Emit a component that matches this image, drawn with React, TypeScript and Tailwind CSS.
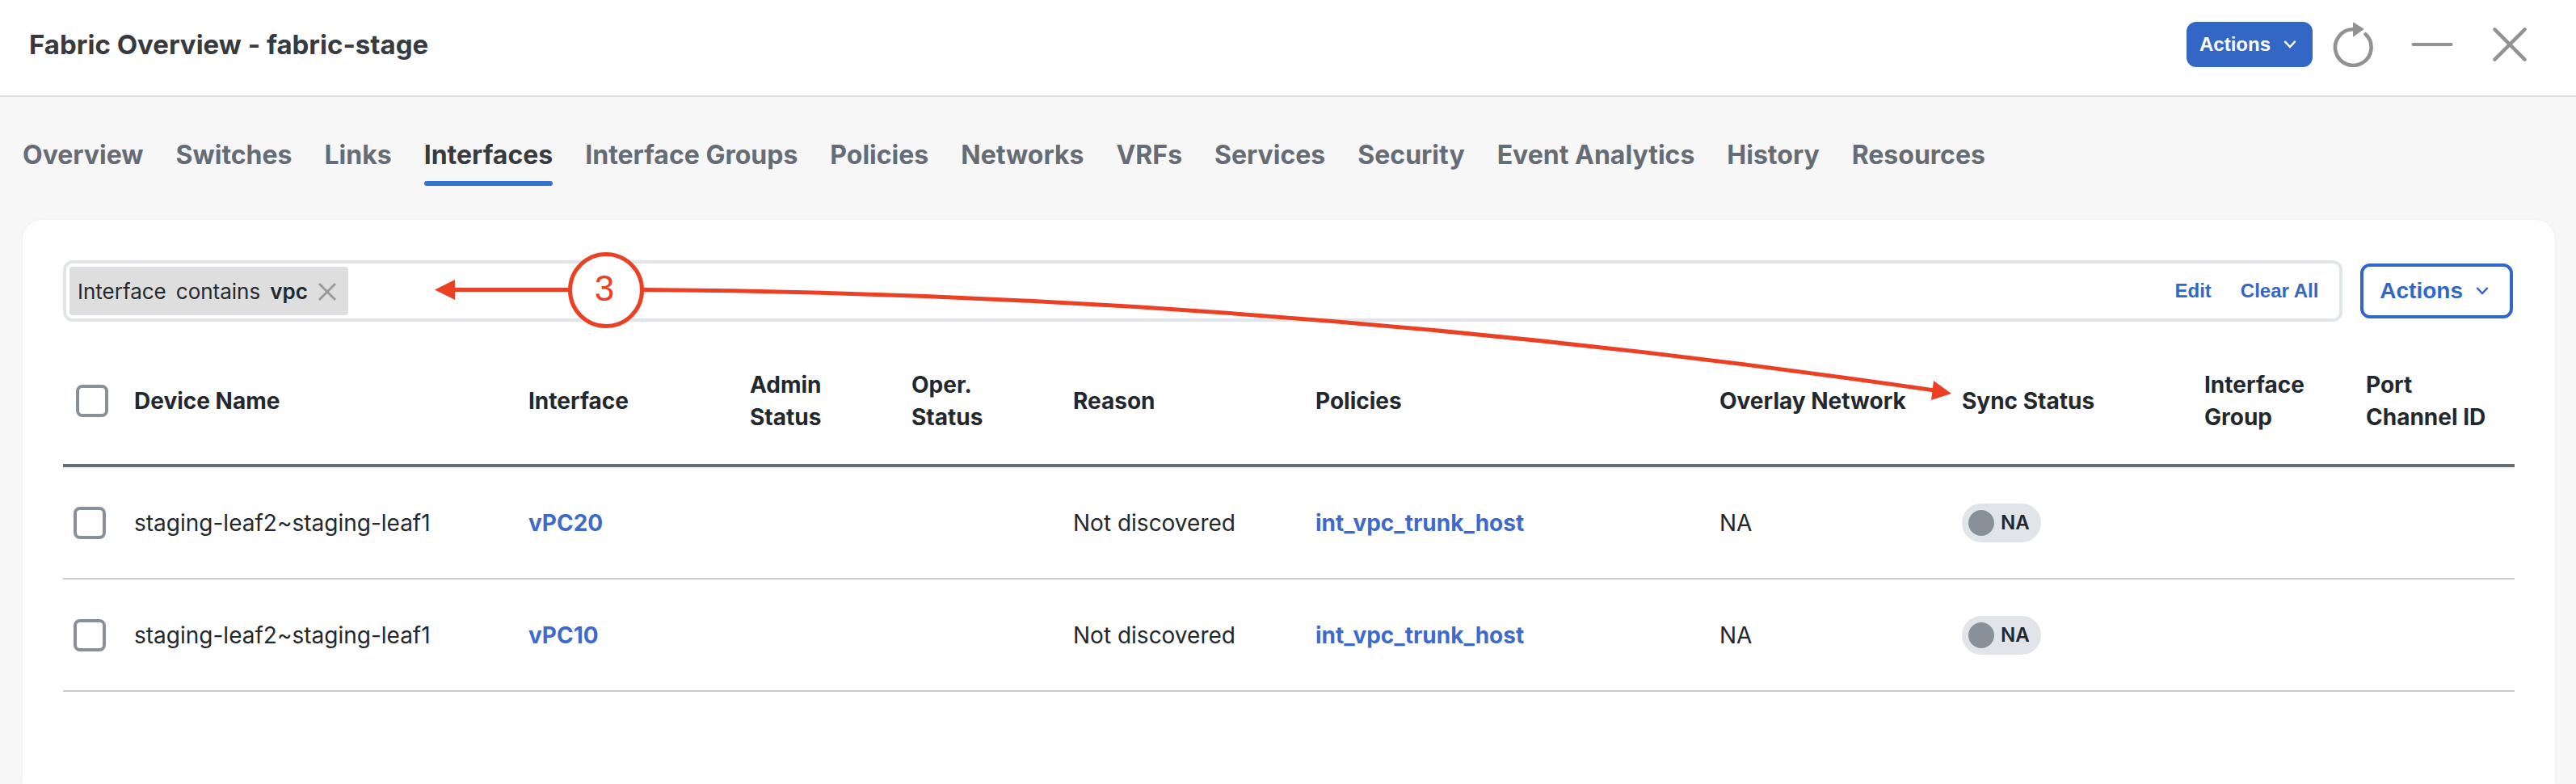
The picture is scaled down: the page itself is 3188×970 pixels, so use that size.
import React from "react";

const tabs = [
  "Overview",
  "Switches",
  "Links",
  "Interfaces",
  "Interface Groups",
  "Policies",
  "Networks",
  "VRFs",
  "Services",
  "Security",
  "Event Analytics",
  "History",
  "Resources",
];

const columns = [
  { label: "Device Name", width: "w-[488px]" },
  { label: "Interface", width: "w-[274px]" },
  { label: "Admin Status", width: "w-[200px]" },
  { label: "Oper. Status", width: "w-[200px]" },
  { label: "Reason", width: "w-[300px]" },
  { label: "Policies", width: "w-[500px]" },
  { label: "Overlay Network", width: "w-[300px]" },
  { label: "Sync Status", width: "w-[300px]" },
  { label: "Interface Group", width: "w-[200px]" },
  { label: "Port Channel ID", width: "w-[200px]" },
];

const rows = [
  { device: "staging-leaf2~staging-leaf1", name: "vPC20", reason: "Not discovered", policy: "int_vpc_trunk_host", network: "NA", sync: "NA" },
  { device: "staging-leaf2~staging-leaf1", name: "vPC10", reason: "Not discovered", policy: "int_vpc_trunk_host", network: "NA", sync: "NA" },
];

function Chevron() {
  return (
    <svg width="16" height="10" viewBox="0 0 16 10" fill="none" stroke="currentColor" strokeWidth="2.4" strokeLinecap="round" aria-hidden="true">
      <path d="M2 1.7 8 8l6-6.3" />
    </svg>
  );
}

function Checkbox({ label }: { label: string }) {
  return (
    <input
      type="checkbox"
      aria-label={label}
      className="block size-10 appearance-none rounded-lg border-4 border-[#889099] bg-white checked:bg-[#3367c5]"
    />
  );
}

function Header() {
  return (
    <header className="flex h-[120px] items-center justify-between border-b-2 border-[#dfdfdf] bg-white pr-[60px] pb-2 pl-9">
      <h1 className="text-[33px] leading-10 font-bold text-[#373a3f]">Fabric Overview - fabric-stage</h1>
      <div className="flex items-center text-[#929292]">
        <button type="button" className="mr-6 flex h-14 items-center gap-4 rounded-xl bg-[#3367c5] pr-5 pl-4 font-['Liberation_Sans',sans-serif] text-2xl font-bold text-white">
          Actions
          <Chevron />
        </button>
        <button type="button" aria-label="Refresh" className="mr-[46px]">
          <svg width="52" height="56" viewBox="0 0 52 56" fill="none" aria-hidden="true">
            <path d="M26 9.3A22.3 22.3 0 1 0 41.6 15.4" stroke="currentColor" strokeWidth="4.6" strokeLinecap="round" />
            <path d="M26.5 1v17l12.5-9z" fill="currentColor" stroke="currentColor" strokeLinejoin="round" />
          </svg>
        </button>
        <button type="button" aria-label="Minimize" className="mr-12">
          <svg width="52" height="44" viewBox="0 0 52 44" stroke="currentColor" strokeWidth="4" strokeLinecap="round" aria-hidden="true">
            <path d="M2.5 22h47" />
          </svg>
        </button>
        <button type="button" aria-label="Close">
          <svg width="44" height="44" viewBox="0 0 44 44" stroke="currentColor" strokeWidth="4.4" strokeLinecap="round" aria-hidden="true">
            <path d="M3.4 3.4l37.2 37.2M40.6 3.4 3.4 40.6" />
          </svg>
        </button>
      </div>
    </header>
  );
}

function FilterBar() {
  return (
    <div className="flex items-center gap-[22px]">
      <div className="flex h-[76px] flex-1 items-center justify-between rounded-xl border-4 border-[#e1e4e8] pr-[26px] pl-1">
        <div className="flex h-[60px] items-center rounded bg-[#dedede] pr-[14px] pl-[10px] text-[26px] text-[#23282e]">
          <span className="mr-3">Interface</span>
          <span className="mr-3">contains</span>
          <span className="mr-3 font-semibold">vpc</span>
          <button type="button" aria-label="Remove filter" className="text-[#9b9b9b]">
            <svg width="24" height="24" viewBox="0 0 24 24" stroke="currentColor" strokeWidth="3" aria-hidden="true">
              <path d="M2 3l20 20M22 3 2 23" />
            </svg>
          </button>
        </div>
        <div className="flex gap-9 font-['Liberation_Sans',sans-serif] text-2xl font-bold text-[#3367c5]">
          <button type="button">Edit</button>
          <button type="button">Clear All</button>
        </div>
      </div>
      <button type="button" className="mr-[2px] flex h-[68px] items-center gap-4 rounded-xl border-4 border-[#3367c5] pr-[26px] pl-5 font-['Liberation_Sans',sans-serif] text-[28px] font-bold text-[#3367c5]">
        Actions
        <Chevron />
      </button>
    </div>
  );
}

function InterfaceTable() {
  return (
    <table className="mt-5 w-full table-fixed border-separate border-spacing-0 text-left text-[28px] leading-10 text-[#23282e] [&_td]:border-b-2 [&_td]:border-[#cbcbcb] [&_th]:border-b-4 [&_th]:border-[#646c76] [&_th]:shadow-[0_2px_0_#f3f3f3]">
      <thead>
        <tr className="h-40">
          <th scope="col" className="w-[72px] pl-4">
            <Checkbox label="Select all interfaces" />
          </th>
          {columns.map((c) => (
            <th key={c.label} scope="col" className={`${c.width} pr-6 pl-4 font-bold`}>
              {c.label}
            </th>
          ))}
        </tr>
      </thead>
      <tbody>
        {rows.map((r) => (
          <tr key={r.name} className="h-[139px]">
            <td className="pl-[13px]">
              <Checkbox label={`Select ${r.name}`} />
            </td>
            <td className="px-4">{r.device}</td>
            <td className="px-4">
              <a href="#interface" className="font-bold text-[#3e6bcb]">{r.name}</a>
            </td>
            <td />
            <td />
            <td className="pl-4">{r.reason}</td>
            <td className="px-4">
              <a href="#policy" className="font-bold text-[#3e6bcb]">{r.policy}</a>
            </td>
            <td className="px-4">{r.network}</td>
            <td className="px-4">
              <span className="flex h-12 w-fit items-center gap-2 rounded-full bg-[#e1e4e8] pr-[14px] pl-2 text-2xl font-semibold">
                <span className="size-8 rounded-full bg-[#889099]" />
                {r.sync}
              </span>
            </td>
            <td />
            <td />
          </tr>
        ))}
      </tbody>
    </table>
  );
}

/* Callout 3, pointing at the filter box and at the Sync Status column. */
function Callout() {
  return (
    <div className="pointer-events-none absolute top-10 left-[510px] text-[#ec4024]">
      <svg width="1880" height="190" viewBox="0 0 1880 190" fill="none" aria-hidden="true">
        <path d="M22 46.5H168M258 46.5Q1040 52 1856 171" stroke="currentColor" strokeWidth="5" />
        <path d="M0 46.5 25 34v25zM1877 175l-22-16-3 24z" fill="currentColor" />
      </svg>
      <div className="absolute top-0 left-[165px] flex size-[94px] items-center justify-center rounded-full border-[5px] border-[#ec4024] bg-white pr-1 pb-1 font-['Liberation_Sans',sans-serif] text-[44px]">
        3
      </div>
    </div>
  );
}

export default function App() {
  return (
    <div className="flex min-h-screen flex-col bg-[#f7f7f7] font-['Inter',sans-serif]">
      <Header />
      <nav className="flex gap-10 px-7 pt-[52px] pb-[42px] text-[32px] leading-10 font-bold text-[#656c75]">
        {tabs.map((t) => (
          <a
            key={t}
            href="#tab"
            aria-current={t === "Interfaces" ? "page" : undefined}
            className={t === "Interfaces" ? "text-[#373a3f] after:mt-3 after:block after:h-[6px] after:rounded-full after:bg-[#3273d0]" : ""}
          >
            {t}
          </a>
        ))}
      </nav>
      <main className="relative mr-[26px] ml-7 flex-1 rounded-t-3xl bg-white px-[50px] pt-[50px] shadow-[0_0_4px_rgba(0,0,0,0.05)]">
        <FilterBar />
        <InterfaceTable />
        <Callout />
      </main>
    </div>
  );
}
